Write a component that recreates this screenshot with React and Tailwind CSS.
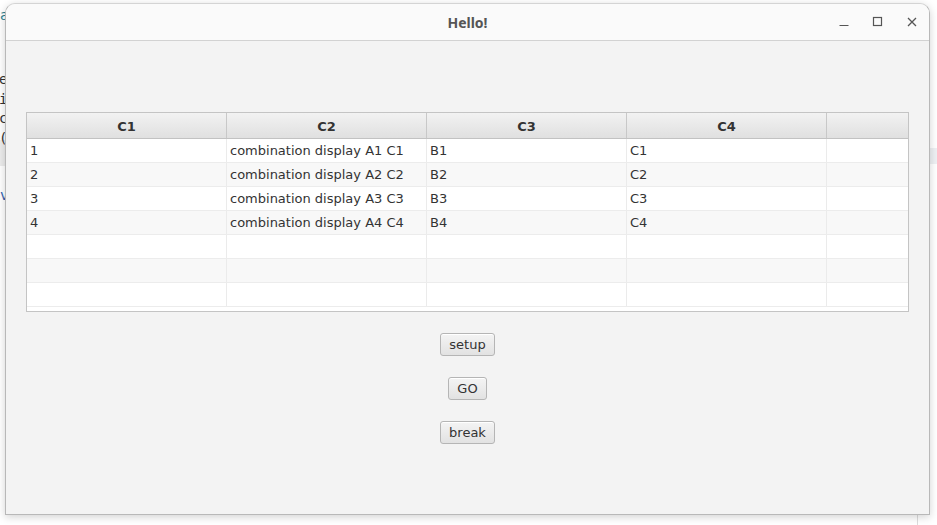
import React from "react";

const rows = [
  ["1", "combination display A1 C1", "B1", "C1"],
  ["2", "combination display A2 C2", "B2", "C2"],
  ["3", "combination display A3 C3", "B3", "C3"],
  ["4", "combination display A4 C4", "B4", "C4"],
  ["", "", "", ""],
  ["", "", "", ""],
  ["", "", "", ""],
];

function FxButton({ children }) {
  return (
    <button className="h-[23px] px-[8px] rounded-[3px] border border-[#b5b5b5] bg-gradient-to-b from-[#f4f4f4] to-[#e2e2e2] text-[13px] text-[#333] leading-none shadow-[inset_0_1px_0_#fff]">
      {children}
    </button>
  );
}

export default function App() {
  return (
    <div
      className="relative w-[937px] h-[525px] bg-white overflow-hidden"
      style={{ fontFamily: '"DejaVu Sans", sans-serif' }}
    >
      {/* stuff behind the window */}
      <div className="absolute left-0 top-[140px] w-[6px] h-[26px] bg-[#ececec]" />
      <div className="absolute right-0 top-[148px] w-[8px] h-[16px] bg-[#eef0f3]" />
      <div className="absolute left-[917px] top-[514px] w-px h-[11px] bg-[#dcdcdc]" />
      <div className="absolute left-0 top-[8px] text-[14px] text-[#2a7f8f] leading-none" style={{ fontFamily: '"DejaVu Sans Mono", monospace' }}>a</div>
      <div className="absolute left-[-1px] top-[70px] text-[14px] text-[#333] leading-[19.5px]" style={{ fontFamily: '"DejaVu Sans Mono", monospace' }}>
        <div>e</div>
        <div>i</div>
        <div>c</div>
        <div>(</div>
      </div>
      <div className="absolute left-0 top-[188px] text-[14px] text-[#3060b0] leading-none" style={{ fontFamily: '"DejaVu Sans Mono", monospace' }}>v</div>

      {/* window */}
      <div className="absolute left-[5px] top-[3px] w-[925px] h-[512px] rounded-t-[10px] border border-[#b8b8b8] border-t-[#d4d4d4] bg-[#f3f3f3] shadow-[0_2px_8px_rgba(0,0,0,0.18)] flex flex-col overflow-hidden">
        <div className="relative h-[37px] shrink-0 bg-[#fafafa] border-b border-[#d2d2d2] flex items-center justify-center">
          <span className="text-[14px] font-bold text-[#555]" style={{ fontFamily: '"Noto Sans", sans-serif' }}>Hello!</span>
          <div className="absolute right-[10px] top-0 h-full flex items-center gap-[20px] text-[#444]">
            <svg width="14" height="14" viewBox="0 0 14 14"><path d="M2.5 10.5h9" stroke="#555" strokeWidth="1.2" /></svg>
            <svg width="14" height="14" viewBox="0 0 14 14"><rect x="2.5" y="2.5" width="8" height="8" fill="none" stroke="#555" strokeWidth="1.2" /></svg>
            <svg width="14" height="14" viewBox="0 0 14 14"><path d="M3 3l8 8M11 3l-8 8" stroke="#555" strokeWidth="1.3" /></svg>
          </div>
        </div>

        <div className="flex-1 px-[20px] pt-[71px] flex flex-col items-center">
          <div className="w-full h-[200px] border border-[#c4c4c4] bg-white overflow-hidden">
            <div className="flex h-[26px] border-b border-[#c2c2c2] bg-gradient-to-b from-[#f2f2f2] to-[#e0e0e0] text-[13px] font-bold text-[#333]">
              {["C1", "C2", "C3", "C4"].map((h) => (
                <div key={h} className="w-[200px] shrink-0 border-r border-[#c8c8c8] pt-[2px] flex items-center justify-center">
                  {h}
                </div>
              ))}
              <div className="flex-1" />
            </div>
            {rows.map((r, i) => (
              <div key={i} className={`flex h-[24px] border-b border-[#ececec] text-[13px] text-[#333] ${i % 2 ? "bg-[#f8f8f8]" : "bg-white"}`}>
                {r.map((c, j) => (
                  <div key={j} className="w-[200px] shrink-0 border-r border-[#ebebeb] px-[3px] flex items-center whitespace-nowrap">
                    {c}
                  </div>
                ))}
                <div className="flex-1" />
              </div>
            ))}
          </div>

          <div className="mt-[21px] flex flex-col items-center gap-[21px]">
            <FxButton>setup</FxButton>
            <FxButton>GO</FxButton>
            <FxButton>break</FxButton>
          </div>
        </div>
      </div>
    </div>
  );
}
